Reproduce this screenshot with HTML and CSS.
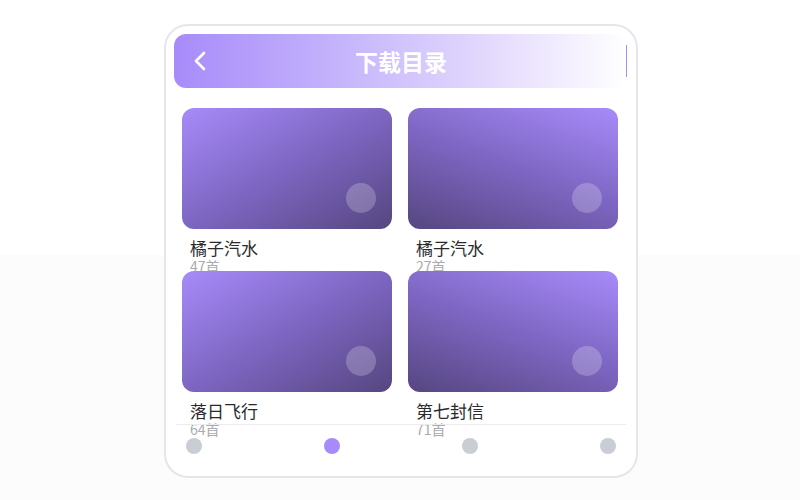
FILE: index.html
```html
<!DOCTYPE html>
<html lang="zh">
<head>
<meta charset="utf-8">
<title>下载目录</title>
<link rel="stylesheet" href="styles.css">
</head>
<body>
<div class="phone">
  <header class="topbar">
    <span class="back">
      <svg width="14" height="20" viewBox="0 0 14 20"><path d="M11 2 L3 10 L11 18" fill="none" stroke="#fff" stroke-width="2.6" stroke-linecap="round" stroke-linejoin="round"/></svg>
    </span>
    <h1 class="title">下载目录</h1>
    <span class="edge"></span>
  </header>
  <main class="content">
    <div class="grid">
      <div class="item">
        <div class="cover cover-a"><span class="play"></span></div>
        <div class="name">橘子汽水</div>
        <div class="count">47首</div>
      </div>
      <div class="item">
        <div class="cover cover-b"><span class="play"></span></div>
        <div class="name">橘子汽水</div>
        <div class="count">27首</div>
      </div>
      <div class="item">
        <div class="cover cover-a"><span class="play"></span></div>
        <div class="name">落日飞行</div>
        <div class="count">64首</div>
      </div>
      <div class="item">
        <div class="cover cover-b"><span class="play"></span></div>
        <div class="name">第七封信</div>
        <div class="count">71首</div>
      </div>
    </div>
  </main>
  <nav class="tabbar">
    <span class="dot"></span>
    <span class="dot active"></span>
    <span class="dot"></span>
    <span class="dot"></span>
  </nav>
</div>
</body>
</html>
```

FILE: styles.css
```css
* { box-sizing: border-box; }
html, body { margin: 0; padding: 0; }
body {
  height: 100vh;
  padding: 2px 0 0 2px;
  background: linear-gradient(to bottom, #ffffff 0, #ffffff 255px, #fcfcfc 255px, #fcfcfc 100%);
  display: flex;
  align-items: center;
  justify-content: center;
  font-family: "Noto Sans CJK SC", "Noto Sans", sans-serif;
}
.phone {
  width: 474px;
  height: 454px;
  border: 2px solid #e6e6ea;
  border-radius: 24px;
  background: #fff;
  padding: 8px;
  display: flex;
  flex-direction: column;
}
.topbar {
  height: 54px;
  border-radius: 12px;
  background: linear-gradient(to right, #a78bfa 0%, #c8b8fc 40%, #e4dafd 70%, #ffffff 100%);
  display: flex;
  align-items: center;
  position: relative;
  flex: none;
}
.back {
  display: flex;
  width: 14px;
  height: 20px;
  margin-left: 19px;
}
.title {
  position: absolute;
  left: 0;
  right: 0;
  margin: 0;
  text-align: center;
  color: #fff;
  font-size: 23px;
  font-weight: 700;
  line-height: 54px;
  pointer-events: none;
}
.edge {
  margin-left: auto;
  margin-right: 1px;
  width: 1px;
  height: 32px;
  background: #a78bfa;
}
.content {
  height: 316px;
  margin-top: 20px;
  padding: 0 8px;
  flex: none;
}
.grid {
  display: grid;
  grid-template-columns: 210px 210px;
  grid-auto-rows: 163px;
  column-gap: 16px;
}
.item { min-width: 0; }
.cover {
  position: relative;
  height: 121px;
  border-radius: 12px;
}
.cover-a { background: linear-gradient(150deg, #a78bfa 0%, #7d66c2 50%, #564680 100%); }
.cover-b { background: linear-gradient(200deg, #a78bfa 0%, #7d66c2 50%, #564680 100%); }
.play {
  position: absolute;
  right: 16px;
  bottom: 16px;
  width: 30px;
  height: 30px;
  border-radius: 50%;
  background: rgba(255, 255, 255, 0.22);
}
.name {
  margin-top: 8px;
  padding-left: 8px;
  font-size: 17px;
  font-weight: 400;
  line-height: 22px;
  color: #2a2a2e;
}
.count {
  padding-left: 8px;
  font-size: 14px;
  font-weight: 400;
  line-height: 14px;
  color: #aaaaaf;
}
.tabbar {
  flex: none;
  margin: 0 2px;
  border-top: 1px solid #ececef;
  padding: 13px 10px 0;
  display: flex;
  justify-content: space-between;
}
.dot {
  width: 16px;
  height: 16px;
  border-radius: 50%;
  background: #c9cdd4;
}
.dot.active { background: #a78bfa; }
```
